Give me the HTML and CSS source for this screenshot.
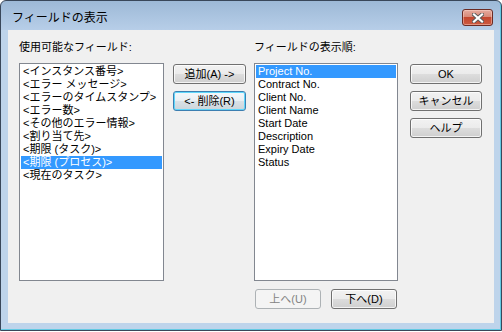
FILE: index.html
```html
<!DOCTYPE html>
<html lang="ja">
<head>
  <meta charset="UTF-8">
  <title>フィールドの表示</title>
  <link rel="stylesheet" href="styles.css">
</head>
<body>
  <div class="window">
    <div class="titlebar">
      <span class="title">フィールドの表示</span>
      <div class="close">
        <svg width="12" height="10" viewBox="0 0 12 10">
          <path d="M2 1.5 L10 8.5 M10 1.5 L2 8.5" stroke="#5a5a5a" stroke-width="4" stroke-linecap="square"/>
          <path d="M2 1.5 L10 8.5 M10 1.5 L2 8.5" stroke="#fff" stroke-width="2.2" stroke-linecap="square"/>
        </svg>
      </div>
    </div>

    <div class="client">
      <div class="content">
        <div class="col col-avail">
          <span class="field-label">使用可能なフィールド:</span>
          <ul class="listbox">
            <li>&lt;インスタンス番号&gt;</li>
            <li>&lt;エラー メッセージ&gt;</li>
            <li>&lt;エラーのタイムスタンプ&gt;</li>
            <li>&lt;エラー数&gt;</li>
            <li>&lt;その他のエラー情報&gt;</li>
            <li>&lt;割り当て先&gt;</li>
            <li>&lt;期限 (タスク)&gt;</li>
            <li class="selected">&lt;期限 (プロセス)&gt;</li>
            <li>&lt;現在のタスク&gt;</li>
          </ul>
        </div>

        <div class="col col-move">
          <button class="btn">追加(A) -&gt;</button>
          <button class="btn focused">&lt;- 削除(R)</button>
        </div>

        <div class="col col-order">
          <span class="field-label">フィールドの表示順:</span>
          <ul class="listbox">
            <li class="selected">Project No.</li>
            <li>Contract No.</li>
            <li>Client No.</li>
            <li>Client Name</li>
            <li>Start Date</li>
            <li>Description</li>
            <li>Expiry Date</li>
            <li>Status</li>
          </ul>
          <div class="order-btns">
            <button class="btn" disabled>上へ(U)</button>
            <button class="btn">下へ(D)</button>
          </div>
        </div>

        <div class="col col-dialog">
          <button class="btn">OK</button>
          <button class="btn">キャンセル</button>
          <button class="btn">ヘルプ</button>
        </div>
      </div>
    </div>
  </div>
</body>
</html>
```

FILE: styles.css
```css
body {
  margin: 0;
  background: #fff;
  font-family: "Liberation Sans", "Noto Sans CJK JP", sans-serif;
  font-size: 11px;
  color: #000;
}

.window {
  width: 502px;
  height: 331px;
  box-sizing: border-box;
  border: 1px solid #39475a;
  border-radius: 6px 6px 0 0;
  background: linear-gradient(#9db9d7, #b7cee8 29px, #bed4eb 29px);
  box-shadow: inset -1px -1px 0 #63c9e2;
  display: flex;
  flex-direction: column;
}

.titlebar {
  height: 29px;
  display: flex;
  justify-content: space-between;
  align-items: flex-start;
}

.title {
  margin: 10px 0 0 11px;
  font-size: 12px;
  line-height: 15px;
}

.close {
  margin: 8px 8px 0 0;
  width: 31px;
  height: 17px;
  box-sizing: border-box;
  border: 1px solid #6b2b24;
  border-radius: 3px;
  background: linear-gradient(#e6ab9e, #d88a79 45%, #c4472f 50%, #cc5a40 100%);
  box-shadow: inset 0 0 0 1px rgba(255, 220, 210, .45);
  display: flex;
  align-items: center;
  justify-content: center;
}

.client {
  flex: 1;
  margin: 0 7px 7px 7px;
  background: #f0f0f0;
}

.content {
  display: flex;
  padding: 10px 12px 0 11px;
}

.col {
  display: flex;
  flex-direction: column;
}

.col-avail { width: 145px; }
.col-move { width: 73px; margin-left: 9px; padding-top: 24px; gap: 7px; }
.col-order { width: 144px; margin-left: 8px; }
.col-dialog { width: 72px; margin-left: 12px; padding-top: 24px; gap: 7px; }

.field-label {
  display: block;
  height: 23px;
  line-height: 14px;
}

.listbox {
  margin: 0;
  padding: 1px;
  list-style: none;
  height: 218px;
  box-sizing: border-box;
  border: 1px solid #828790;
  background: #fff;
}

.listbox li {
  height: 13px;
  line-height: 13px;
  padding-left: 2px;
  white-space: nowrap;
}

.listbox .selected {
  background: #3399ff;
  color: #fff;
}

.btn {
  height: 20px;
  padding: 0;
  box-sizing: border-box;
  border: 1px solid #707070;
  border-radius: 3px;
  background: linear-gradient(#f2f2f2, #ebebeb 50%, #dddddd 50%, #cfcfcf);
  box-shadow: inset 0 0 0 1px rgba(255, 255, 255, .75);
  font-family: "Liberation Sans", "Noto Sans CJK JP", sans-serif;
  font-size: 11px;
  line-height: 17px;
  color: #000;
}

.btn.focused {
  border-color: #3c7fb1;
  background: linear-gradient(#f4f8fb, #e9eff3 50%, #dae2e7 50%, #ccd5db);
  box-shadow: inset 0 0 0 1px #5fd7fb;
}

.btn:disabled {
  border-color: #adb2b5;
  background: #f4f4f4;
  box-shadow: none;
  color: #838383;
}

.order-btns {
  display: flex;
  gap: 10px;
  margin: 8px 0 0 1px;
}

.order-btns .btn { width: 66px; }
```
